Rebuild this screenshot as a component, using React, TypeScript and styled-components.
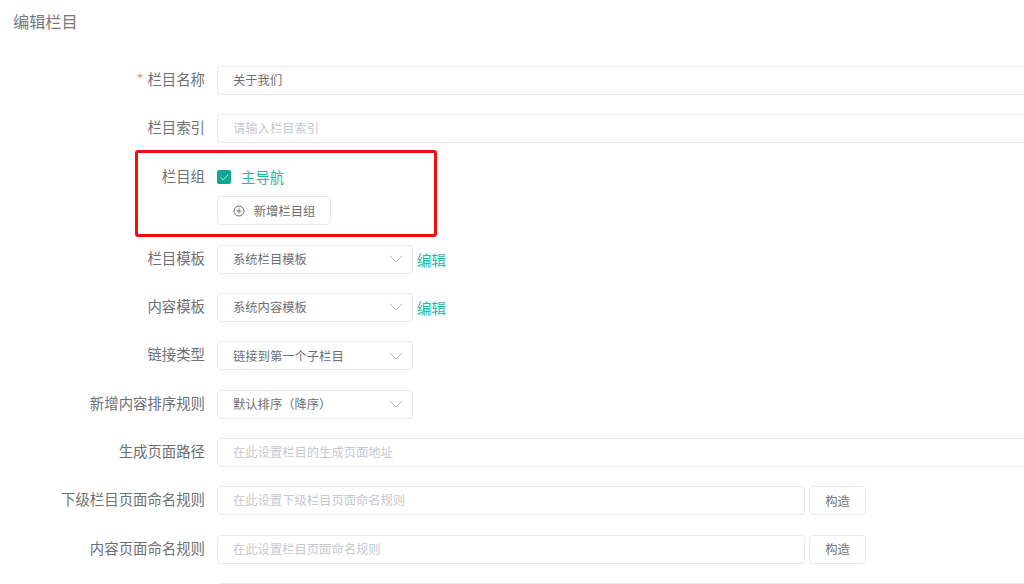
import React from "react";
import styled, { createGlobalStyle } from "styled-components";
import { Check, ChevronDown } from "lucide-react";

const GlobalStyle = createGlobalStyle`
  html, body {
    margin: 0;
    padding: 0;
    background: #fff;
    overflow: hidden;
  }
  * {
    box-sizing: border-box;
  }
`

const Page = styled.div`
  position: relative;
  width: 1024px;
  height: 584px;
  overflow: hidden;
  font-family: "Noto Sans CJK SC", "Noto Sans", sans-serif;
  color: #6e7074;
`
const Title = styled.h1`
  margin: 0;
  padding: 9px 0 0 13px;
  height: 66px;
  font-size: 16.2px;
  line-height: 24px;
  font-weight: 400;
  color: #77797d;
`
const Form = styled.form`
  display: flex;
  flex-direction: column;
  gap: 19.35px;
  width: 1100px;
`
const Row = styled.div`
  display: flex;
  align-items: flex-start;
`
const Label = styled.label<{ $required?: boolean }>`
  flex: 0 0 205px;
  margin-right: 12px;
  text-align: right;
  font-size: 14.4px;
  line-height: 26px;
  color: #6e7074;
  white-space: nowrap;
  &::before {
    content: ${(p) => (p.$required ? '"*"' : "none")};
    color: #f78989;
    margin-right: 4px;
  }
`
const Field = styled.div`
  display: flex;
  align-items: center;
  gap: 4px;
  flex: 1;
`
const Stack = styled.div`
  display: flex;
  flex-direction: column;
  align-items: flex-start;
  gap: 4.5px;
`
const TextBox = styled.div<{ $width?: number; $placeholder?: boolean }>`
  flex: 0 0 auto;
  width: ${(p) => p.$width ?? 900}px;
  height: 29px;
  padding: 0 15px;
  border: 1px solid #e8e9ee;
  border-radius: 4px;
  background: #fff;
  font-size: 12.3px;
  line-height: 27px;
  color: ${(p) => (p.$placeholder ? "#c6c9d0" : "#6e7074")};
`
const SelectBox = styled.div`
  display: flex;
  align-items: center;
  justify-content: space-between;
  width: 196px;
  height: 29px;
  padding: 0 4px 0 15px;
  border: 1px solid #e8e9ee;
  border-radius: 4px;
  font-size: 12.3px;
  color: #6e7074;
  svg {
    color: #b4b8c0;
  }
`
const EditLink = styled.a`
  font-size: 14.4px;
  line-height: 29px;
  color: #1fb9a1;
`
const CheckRow = styled.div`
  display: flex;
  align-items: center;
  gap: 10px;
  height: 29px;
`
const CheckMark = styled.span`
  display: flex;
  align-items: center;
  justify-content: center;
  width: 14px;
  height: 14px;
  border-radius: 2px;
  background: #0ea78f;
  color: #fff;
`
const CheckText = styled.span`
  font-size: 14.4px;
  line-height: 26px;
  color: #1fb9a1;
`
const Button = styled.button<{ $wide?: boolean }>`
  display: flex;
  align-items: center;
  justify-content: center;
  gap: 9px;
  width: ${(p) => (p.$wide ? 114 : 57)}px;
  height: 29px;
  padding: 0;
  border: 1px solid #e8e9ee;
  border-radius: 4px;
  background: #fff;
  font-family: inherit;
  font-size: 12.3px;
  color: #6e7074;
`
// red annotation drawn over the screenshot
const Highlight = styled.div`
  position: absolute;
  left: 135px;
  top: 150px;
  width: 302px;
  height: 87px;
  border: 3px solid #f40d0d;
  border-radius: 3px;
  pointer-events: none;
`

const PlusCircle = () => (
  <svg width="12" height="12" viewBox="0 0 12 12" fill="none" stroke="#6e7074" strokeWidth="1">
    <circle cx="6" cy="6" r="5" />
    <path d="M6 3.5v5M3.5 6h5" />
  </svg>
);

const Select = ({ value }: { value: string }) => (
  <SelectBox>
    {value}
    <ChevronDown size={24} strokeWidth={1} />
  </SelectBox>
);

const App: React.FC = () => {
  return (
    <Page>
      <GlobalStyle />
      <Title>编辑栏目</Title>
      <Form>
        <Row>
          <Label $required>栏目名称</Label>
          <Field><TextBox>关于我们</TextBox></Field>
        </Row>
        <Row>
          <Label>栏目索引</Label>
          <Field><TextBox $placeholder>请输入栏目索引</TextBox></Field>
        </Row>
        <Row>
          <Label>栏目组</Label>
          <Stack>
            <CheckRow>
              <CheckMark><Check size={11} strokeWidth={1.6} /></CheckMark>
              <CheckText>主导航</CheckText>
            </CheckRow>
            <Button type="button" $wide><PlusCircle />新增栏目组</Button>
          </Stack>
        </Row>
        <Row>
          <Label>栏目模板</Label>
          <Field><Select value="系统栏目模板" /><EditLink>编辑</EditLink></Field>
        </Row>
        <Row>
          <Label>内容模板</Label>
          <Field><Select value="系统内容模板" /><EditLink>编辑</EditLink></Field>
        </Row>
        <Row>
          <Label>链接类型</Label>
          <Field><Select value="链接到第一个子栏目" /></Field>
        </Row>
        <Row>
          <Label>新增内容排序规则</Label>
          <Field><Select value="默认排序（降序）" /></Field>
        </Row>
        <Row>
          <Label>生成页面路径</Label>
          <Field><TextBox $placeholder>在此设置栏目的生成页面地址</TextBox></Field>
        </Row>
        <Row>
          <Label>下级栏目页面命名规则</Label>
          <Field>
            <TextBox $placeholder $width={588}>在此设置下级栏目页面命名规则</TextBox>
            <Button type="button">构造</Button>
          </Field>
        </Row>
        <Row>
          <Label>内容页面命名规则</Label>
          <Field>
            <TextBox $placeholder $width={588}>在此设置栏目页面命名规则</TextBox>
            <Button type="button">构造</Button>
          </Field>
        </Row>
        <Row>
          <Label />
          <Field><TextBox /></Field>
        </Row>
      </Form>
      <Highlight />
    </Page>
  );
};

export default App;
